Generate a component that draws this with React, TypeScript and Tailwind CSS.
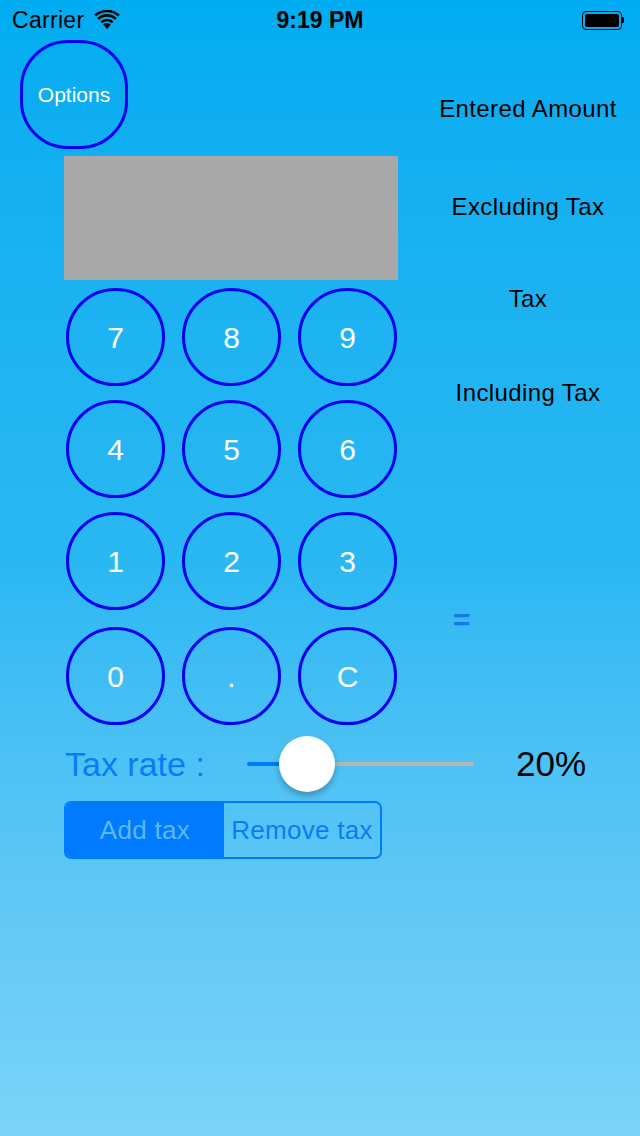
import React from "react";

const font = { fontFamily: '"Liberation Sans", Arial, sans-serif' };

const rows = [
  ["7", "8", "9"],
  ["4", "5", "6"],
  ["1", "2", "3"],
  ["0", ".", "C"],
];

function Wifi() {
  return (
    <svg width="26" height="20" viewBox="0 0 26 20" className="ml-[10px]">
      <path d="M13 19 L9.2 14.6 A5.6 5.6 0 0 1 16.8 14.6 Z" fill="black" />
      <path d="M6.4 11.4 A9.6 9.6 0 0 1 19.6 11.4 L17.9 13.3 A7 7 0 0 0 8.1 13.3 Z" fill="black" />
      <path d="M3.2 7.9 A14.4 14.4 0 0 1 22.8 7.9 L21 9.9 A11.6 11.6 0 0 0 5 9.9 Z" fill="black" />
      <path d="M0.2 4.6 A19 19 0 0 1 25.8 4.6 L24 6.5 A16.3 16.3 0 0 0 2 6.5 Z" fill="black" />
    </svg>
  );
}

function Battery() {
  return (
    <div className="flex items-center">
      <div className="w-[40px] h-[19px] rounded-[4px] border border-black p-[2px]">
        <div className="w-full h-full rounded-[2px] bg-black" />
      </div>
      <div className="w-[2px] h-[6px] bg-black rounded-r-[1px]" />
    </div>
  );
}

export default function App() {
  return (
    <div
      className="w-[640px] h-[1136px] overflow-hidden bg-gradient-to-b from-[#00acf1] via-[#2ab8f3] to-[#7bd3f8]"
      style={font}
    >
      {/* status bar */}
      <div className="relative flex items-center h-[40px] px-[12px]">
        <span className="text-[23px] tracking-[0.3px] text-black">Carrier</span>
        <Wifi />
        <span className="absolute left-1/2 -translate-x-1/2 text-[23px] font-bold text-black">9:19 PM</span>
        <div className="ml-auto mr-[4px]">
          <Battery />
        </div>
      </div>

      <div className="flex">
        {/* left column */}
        <div className="w-[416px] flex flex-col">
          <button
            type="button"
            className="ml-[20px] w-[108px] h-[109px] rounded-[48px] border-[3px] border-[#0000f5] text-white text-[21px]"
          >
            Options
          </button>
          <div className="ml-[64px] mt-[7px] w-[334px] h-[124px] bg-[#a8a8a8]" />
          <div className="ml-[66px] mt-[8px] flex flex-col gap-y-[14px]">
            {rows.map((row, i) => (
              <div key={i} className={`flex gap-x-[17px] ${i === 3 ? "mt-[3px]" : ""}`}>
                {row.map((k) => (
                  <button
                    key={k}
                    type="button"
                    className="w-[99px] h-[98px] rounded-full border-[3px] border-[#0000f5] text-white text-[30px] flex items-center justify-center"
                  >
                    {k}
                  </button>
                ))}
              </div>
            ))}
          </div>
        </div>

        {/* right column */}
        <div className="flex-1 flex flex-col items-center text-black text-[24px] tracking-[0.4px] leading-[28px]">
          <div className="mt-[55px]">Entered Amount</div>
          <div className="mt-[70px]">Excluding Tax</div>
          <div className="mt-[64px]">Tax</div>
          <div className="mt-[66px]">Including Tax</div>
          <div className="mt-[196px] self-start ml-[37px] text-[#1878e4] text-[30px] font-bold leading-[34px]">=</div>
        </div>
      </div>

      {/* tax rate */}
      <div className="flex items-center h-[56px] mt-[11px]">
        <div className="ml-[65px] w-[182px] text-[34px] text-[#0a7cf6]">Tax rate :</div>
        <div className="relative w-[227px] h-[56px] flex items-center">
          <div className="w-[60px] h-[4px] bg-[#007aff] rounded-l-full" />
          <div className="flex-1 h-[4px] bg-[#b5b5b5] rounded-r-full" />
          <div className="absolute left-[32px] top-0 w-[56px] h-[56px] rounded-full bg-white shadow-[0_4px_6px_rgba(0,0,0,0.25)]" />
        </div>
        <div className="ml-[42px] text-[35px] text-black">20%</div>
      </div>

      {/* segmented control */}
      <div className="ml-[64px] mt-[9px] w-[318px] h-[58px] flex rounded-[7px] border-2 border-[#007aff] overflow-hidden text-[26px] tracking-[0.3px]">
        <div className="w-[158px] bg-[#007aff] text-[#5cb9f9] flex items-center justify-center">Add tax</div>
        <div className="flex-1 text-[#0a7cf6] flex items-center justify-center">Remove tax</div>
      </div>
    </div>
  );
}
